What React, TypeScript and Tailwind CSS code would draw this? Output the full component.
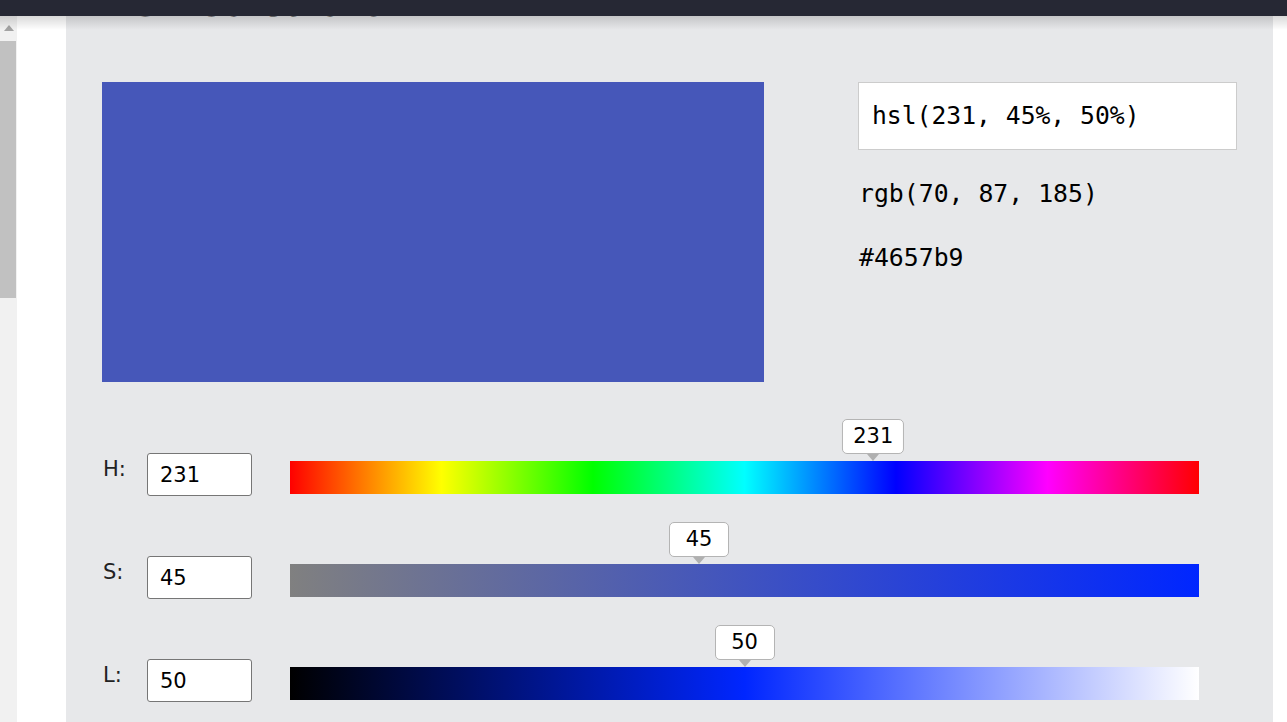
import React from "react";

const sans = { fontFamily: '"DejaVu Sans", Verdana, sans-serif' };
const mono = { fontFamily: '"DejaVu Sans Mono", "Liberation Mono", monospace' };

function Slider({
  label,
  value,
  max,
  gradient,
}: {
  label: string;
  value: number;
  max: number;
  gradient: string;
}) {
  const pct = (value / max) * 100;
  return (
    <div className="flex items-start h-[43px]">
      <div className="w-[45px] pl-[1px] text-[21px] leading-[32px] text-[#222]" style={sans}>
        {label}
      </div>
      <input
        readOnly
        value={String(value)}
        className="w-[105px] h-[43px] bg-white border border-[#767676] rounded-[3px] pl-[12px] text-[21px] text-black outline-none"
        style={sans}
      />
      <div className={`relative ml-[38px] mt-[8px] w-[909px] h-[33px] ${gradient}`}>
        <div
          className="absolute bottom-[40px] -translate-x-1/2 flex flex-col items-center"
          style={{ left: `${pct}%` }}
        >
          <div
            className="h-[35px] min-w-[60px] px-[10px] bg-white border border-[#b4b4b4] rounded-[5px] flex items-center justify-center text-[21px] text-black"
            style={sans}
          >
            {value}
          </div>
        </div>
        <div
          className="absolute bottom-[33px] -translate-x-1/2 w-0 h-0 border-l-[6px] border-r-[6px] border-t-[7px] border-l-transparent border-r-transparent border-t-[#b0b0b0]"
          style={{ left: `${pct}%` }}
        />
      </div>
    </div>
  );
}

export default function App() {
  return (
    <div className="relative w-[1287px] h-[722px] overflow-hidden flex flex-col bg-white">
      <div className="h-[16px] bg-[#262834] shrink-0" />
      <div className="flex flex-1 min-h-0">
        {/* scrollbar */}
        <div className="w-[17px] bg-[#f1f1f1] flex flex-col items-center shrink-0">
          <div className="mt-[9px] w-0 h-0 border-l-[5px] border-r-[5px] border-b-[6px] border-l-transparent border-r-transparent border-b-[#a3a3a3]" />
          <div className="mt-[10px] self-start w-[16px] h-[257px] bg-[#c1c1c1]" />
        </div>
        <div className="w-[49px] bg-white shrink-0" />
        {/* panel */}
        <div className="w-[1207px] bg-[#e7e8ea] overflow-hidden pl-[36px] shrink-0">
          <h1
            className="mt-[-38px] h-[48px] text-[41px] leading-[48px] text-[#222]"
            style={sans}
          >
            HSL Calculator
          </h1>
          <div className="mt-[56px] flex items-start">
            <div className="w-[662px] h-[300px] bg-[#4657b9]" />
            <div className="ml-[94px] flex flex-col">
              <div
                className="w-[379px] h-[68px] bg-white border border-[#cccccc] flex items-center pl-[13px] text-[24.7px] text-black"
                style={mono}
              >
                hsl(231, 45%, 50%)
              </div>
              <div className="mt-[28px] pl-[1px] text-[24.8px] leading-[32px] text-black" style={mono}>
                rgb(70, 87, 185)
              </div>
              <div className="mt-[32px] pl-[1px] text-[24.8px] leading-[32px] text-black" style={mono}>
                #4657b9
              </div>
            </div>
          </div>
          <div className="mt-[71px] flex flex-col gap-[60px]">
            <Slider
              label="H:"
              value={231}
              max={360}
              gradient="bg-[linear-gradient(to_right,#ff0000,#ffff00,#00ff00,#00ffff,#0000ff,#ff00ff,#ff0000)]"
            />
            <Slider
              label="S:"
              value={45}
              max={100}
              gradient="bg-[linear-gradient(to_right,#808080,#0026ff)]"
            />
            <Slider
              label="L:"
              value={50}
              max={100}
              gradient="bg-[linear-gradient(to_right,#000000,#0026ff,#ffffff)]"
            />
          </div>
        </div>
        <div className="flex-1 bg-white" />
      </div>
      <div className="pointer-events-none absolute left-0 right-0 top-[16px] h-[14px] bg-gradient-to-b from-black/15 to-transparent" />
    </div>
  );
}
